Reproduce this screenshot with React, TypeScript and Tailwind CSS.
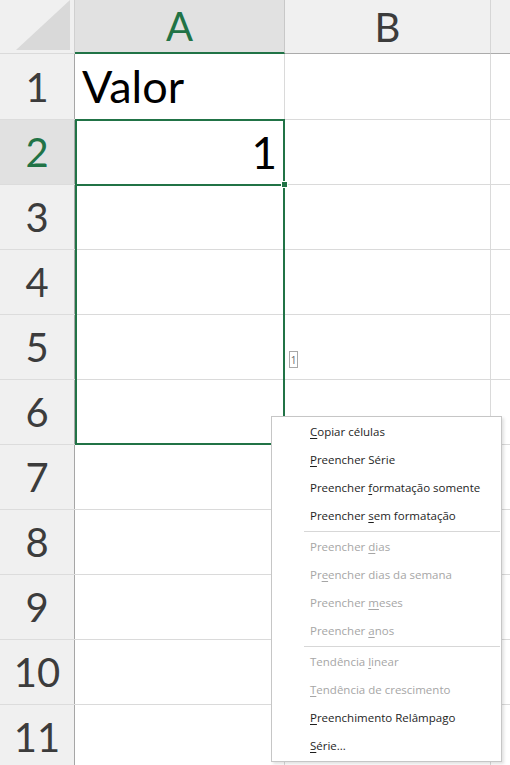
import React from "react";

function RowHeader({ n, active }: { n: number; active?: boolean }) {
  return (
    <div
      className={
        "w-[75px] shrink-0 h-full flex items-center justify-center border-r border-r-[#a6a6a6] " +
        (active ? "bg-[#e1e1e1] text-[#217346]" : "bg-[#f0f0f0] text-[#3c3c3c]")
      }
    >
      <span className="text-[40px] leading-none">{n}</span>
    </div>
  );
}

type Item = { pre: string; u: string; post: string; disabled?: boolean };

const groups: Item[][] = [
  [
    { pre: "", u: "C", post: "opiar células" },
    { pre: "", u: "P", post: "reencher Série" },
    { pre: "Preencher ", u: "f", post: "ormatação somente" },
    { pre: "Preencher ", u: "s", post: "em formatação" },
  ],
  [
    { pre: "Preencher ", u: "d", post: "ias", disabled: true },
    { pre: "Pr", u: "e", post: "encher dias da semana", disabled: true },
    { pre: "Preencher ", u: "m", post: "eses", disabled: true },
    { pre: "Preencher ", u: "a", post: "nos", disabled: true },
  ],
  [
    { pre: "Tendência ", u: "l", post: "inear", disabled: true },
    { pre: "", u: "T", post: "endência de crescimento", disabled: true },
    { pre: "", u: "P", post: "reenchimento Relâmpago" },
    { pre: "", u: "S", post: "érie..." },
  ],
];

export default function App() {
  const rows = Array.from({ length: 11 }, (_, i) => i + 1);
  return (
    <div
      className="relative w-[510px] h-[765px] overflow-hidden bg-white"
      style={{ fontFamily: "Lato, 'Open Sans', sans-serif" }}
    >
      {/* Column headers */}
      <div className="flex h-[54px]">
        <div className="w-[75px] shrink-0 h-full bg-[#f0f0f0] border-r border-r-[#d0d0d0] border-b border-b-[#dadada] flex items-end justify-end">
          <svg width="56" height="50" viewBox="0 0 56 50" className="mb-[3px] mr-[2px]">
            <polygon points="54,0 54,50 0,50" fill="#d9d9d9" />
          </svg>
        </div>
        <div className="w-[210px] shrink-0 h-full bg-[#e1e1e1] border-r border-r-[#c8c8c8] border-b-2 border-b-[#217346] flex items-center justify-center">
          <span className="text-[40px] leading-none text-[#217346]">A</span>
        </div>
        <div className="w-[206px] shrink-0 h-full bg-[#f0f0f0] border-r border-r-[#d6d6d6] border-b border-b-[#ababab] flex items-center justify-center">
          <span className="text-[40px] leading-none text-[#3c3c3c]">B</span>
        </div>
        <div className="flex-1 h-full bg-[#f0f0f0] border-b border-b-[#ababab]" />
      </div>

      {/* Rows */}
      {rows.map((n) => (
        <div key={n} className={"flex " + (n === 1 ? "h-[66px]" : "h-[65px]")}>
          <div className="w-[75px] shrink-0 h-full border-b border-b-[#dcdcdc]">
            <RowHeader n={n} active={n === 2} />
          </div>
          <div className="w-[210px] shrink-0 h-full border-r border-r-[#dadada] border-b border-b-[#dadada] flex items-end px-[7px] pb-[10px]">
            {n === 1 && <span className="text-[45px] leading-none text-black">Valor</span>}
            {n === 2 && <span className="ml-auto text-[44px] leading-none text-black">1</span>}
          </div>
          <div className="w-[206px] shrink-0 h-full border-r border-r-[#dadada] border-b border-b-[#dadada]" />
          <div className="flex-1 h-full border-b border-b-[#dadada]" />
        </div>
      ))}

      {/* Selection range */}
      <div className="absolute left-[75px] top-[119px] w-[210px] h-[326px] border-2 border-[#217346]" />
      {/* Active cell */}
      <div className="absolute left-[75px] top-[119px] w-[210px] h-[67px] border-2 border-[#217346]" />
      {/* Fill handle */}
      <div className="absolute left-[281px] top-[181px] w-[7px] h-[7px] bg-[#217346] border border-white" />

      {/* Auto fill tooltip */}
      <div className="absolute left-[289px] top-[351px] w-[9px] h-[17px] border border-[#a8a8a8] bg-white flex items-center justify-center">
        <span className="text-[10px] leading-none text-[#6a6a6a]" style={{ fontFamily: "'Open Sans', sans-serif" }}>1</span>
      </div>

      {/* Context menu */}
      <div
        className="absolute left-[271px] top-[416px] w-[231px] bg-white border border-[#c6c6c6] shadow-[2px_2px_3px_rgba(0,0,0,0.12)] pt-[1px] pb-[1px]"
        style={{ fontFamily: "'Open Sans', sans-serif" }}
      >
        {groups.map((g, gi) => (
          <div key={gi}>
            {gi > 0 && <div className="ml-[32px] mr-[1px] my-[1px] h-px bg-[#d7d7d7]" />}
            {g.map((it, ii) => (
              <div
                key={ii}
                className={
                  "h-[28px] flex items-center pl-[38px] text-[11.5px] whitespace-pre " +
                  (it.disabled ? "text-[#a6a6a6]" : "text-[#1e1e1e]")
                }
              >
                <span>
                  {it.pre}
                  <span className="underline underline-offset-2">{it.u}</span>
                  {it.post}
                </span>
              </div>
            ))}
          </div>
        ))}
      </div>
    </div>
  );
}
